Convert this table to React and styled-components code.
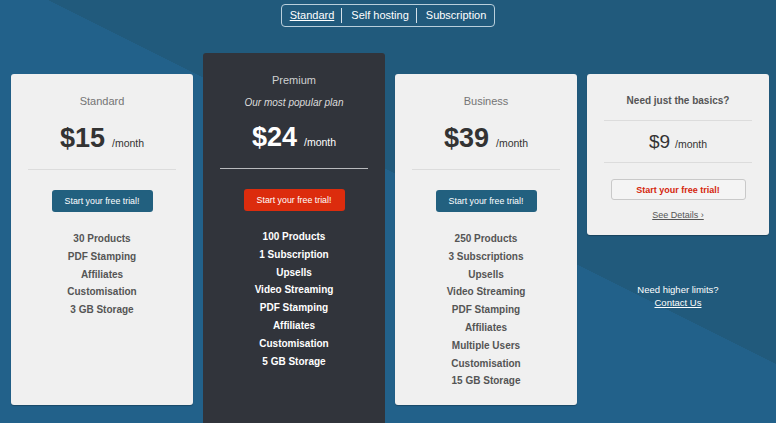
import styled, { createGlobalStyle } from 'styled-components';

const Global = createGlobalStyle`
  html, body {
    margin: 0;
    padding: 0;
    height: 100%;
    overflow: hidden;
  }
  body {
    font-family: "Liberation Sans", Arial, Helvetica, sans-serif;
  }
`;

const Page = styled.div`
  width: 100vw;
  height: 100vh;
  overflow: hidden;
  background: linear-gradient(26.57deg, #22618a 0px, #22618a 400px, #215a7c 400px, #215a7c 100%);
  display: flex;
  flex-direction: column;
  align-items: center;
`;

const Tabs = styled.nav`
  flex-shrink: 0;
  margin-top: 4px;
  height: 21px;
  display: flex;
  align-items: center;
  border: 1px solid #b9cfdc;
  border-radius: 4px;
  padding: 0 1px;
`;

const Tab = styled.a`
  font-size: 11px;
  color: #fff;
  padding: 0 7px;
  line-height: 15px;
  text-decoration: ${p => (p.$active ? 'underline' : 'none')};
  border-left: ${p => (p.$first ? 'none' : '1px solid #d6e2ea')};
  &:nth-child(2) { padding-left: 9px; }
  &:nth-child(3) { padding-left: 9px; }
`;

const Row = styled.div`
  flex-shrink: 0;
  align-self: stretch;
  display: flex;
  align-items: flex-start;
  gap: 10px;
  padding: 26px 0 0 11px;
`;

const Card = styled.div`
  width: 182px;
  box-sizing: border-box;
  margin-top: ${p => (p.$featured ? '0' : '21px')};
  min-height: ${p => p.$minH || 0}px;
  padding: 18px 17px 13px;
  border-radius: 3px;
  background: ${p => (p.$featured ? '#31343b' : '#f0f0f0')};
  box-shadow: ${p => (p.$featured ? 'none' : '0 1px 1px rgba(0,0,0,0.25)')};
  text-align: center;
  display: flex;
  flex-direction: column;
  align-items: center;
`;

const Title = styled.h3`
  margin: 0;
  font-size: 11px;
  font-weight: 300;
  line-height: 18px;
  color: ${p => (p.$dark ? '#cfd0d2' : '#747474')};
`;

const Subtitle = styled.p`
  margin: 5px 0 0;
  font-size: 10px;
  font-style: italic;
  line-height: 18px;
  color: #dcdcdc;
`;

const BasicTitle = styled.h3`
  margin: 0;
  font-size: 10px;
  font-weight: bold;
  line-height: 18px;
  color: #555;
`;

const Price = styled.div`
  margin-top: ${p => p.$mt}px;
  height: 36px;
  display: flex;
  align-items: baseline;
  justify-content: center;
  gap: 7px;
  line-height: 36px;
  color: ${p => (p.$dark ? '#fff' : '#333')};
`;

const Amount = styled.span`
  font-size: 27px;
  font-weight: bold;
`;

const Per = styled.span`
  font-size: 10.5px;
`;

const SmallPrice = styled.div`
  margin-top: 7px;
  height: 28px;
  display: flex;
  align-items: baseline;
  justify-content: center;
  gap: 5px;
  line-height: 28px;
  color: #333;
`;

const SmallAmount = styled.span`
  font-size: 19px;
`;

const Divider = styled.hr`
  align-self: stretch;
  border: none;
  height: 1px;
  margin: ${p => p.$mt}px 0 0;
  background: ${p => (p.$dark ? '#b8babd' : '#dcdcdc')};
`;

const Button = styled.button`
  margin-top: ${p => p.$mt || 20}px;
  width: ${p => p.$w || 101}px;
  height: ${p => p.$h || 22}px;
  border: ${p => (p.$outline ? '1px solid #c9c9c9' : 'none')};
  border-radius: 3px;
  font-family: inherit;
  font-size: ${p => (p.$outline ? '9px' : '8.8px')};
  font-weight: ${p => (p.$outline ? 'bold' : 'normal')};
  color: ${p => (p.$outline ? '#d5260c' : '#fff')};
  background: ${p => (p.$outline ? '#f4f4f4' : p.$red ? '#dc2c0d' : '#22607f')};
  padding: 0;
  cursor: pointer;
`;

const Features = styled.ul`
  list-style: none;
  margin: ${p => p.$mt || 18}px 0 0;
  padding: 0;
  font-size: 10px;
  font-weight: bold;
  line-height: 17.8px;
  color: ${p => (p.$dark ? '#fff' : '#555')};
`;

const Details = styled.a`
  margin-top: 8px;
  font-size: 9px;
  line-height: 14px;
  color: #555;
  text-decoration: underline;
`;

const Column = styled.div`
  display: flex;
  flex-direction: column;
  align-items: center;
`;

const Limits = styled.p`
  margin: 48px 0 0;
  font-size: 9.5px;
  line-height: 13px;
  color: #fff;
  text-align: center;
  a {
    color: #fff;
    text-decoration: underline;
  }
`;

const plans = [
  {
    name: 'Standard',
    price: '$15',
    features: ['30 Products', 'PDF Stamping', 'Affiliates', 'Customisation', '3 GB Storage'],
  },
  {
    name: 'Premium',
    price: '$24',
    featured: true,
    features: ['100 Products', '1 Subscription', 'Upsells', 'Video Streaming', 'PDF Stamping', 'Affiliates', 'Customisation', '5 GB Storage'],
  },
  {
    name: 'Business',
    price: '$39',
    features: ['250 Products', '3 Subscriptions', 'Upsells', 'Video Streaming', 'PDF Stamping', 'Affiliates', 'Multiple Users', 'Customisation', '15 GB Storage'],
  },
];

function PlanCard({ plan }) {
  const dark = plan.featured;
  return (
    <Card $featured={dark} $minH={dark ? 380 : 331}>
      <Title $dark={dark}>{plan.name}</Title>
      {dark && <Subtitle>Our most popular plan</Subtitle>}
      <Price $dark={dark} $mt={dark ? 7 : 10}>
        <Amount>{plan.price}</Amount>
        <Per>/month</Per>
      </Price>
      <Divider $dark={dark} $mt={13} />
      <Button $red={dark} $mt={20}>Start your free trial!</Button>
      <Features $dark={dark} $mt={dark ? 17 : 18}>
        {plan.features.map(f => <li key={f}>{f}</li>)}
      </Features>
    </Card>
  );
}

export default function App() {
  return (
    <>
      <Global />
      <Page>
        <Tabs>
          <Tab $first $active href="#">Standard</Tab>
          <Tab href="#">Self hosting</Tab>
          <Tab href="#">Subscription</Tab>
        </Tabs>
        <Row>
          {plans.map(p => <PlanCard key={p.name} plan={p} />)}
          <Column>
            <Card>
              <BasicTitle>Need just the basics?</BasicTitle>
              <Divider $mt={10} />
              <SmallPrice>
                <SmallAmount>$9</SmallAmount>
                <Per>/month</Per>
              </SmallPrice>
              <Divider $mt={6} />
              <Button $outline $w={135} $h={21} $mt={16}>Start your free trial!</Button>
              <Details href="#">See Details ›</Details>
            </Card>
            <Limits>
              Need higher limits?<br />
              <a href="#">Contact Us</a>
            </Limits>
          </Column>
        </Row>
      </Page>
    </>
  );
}
